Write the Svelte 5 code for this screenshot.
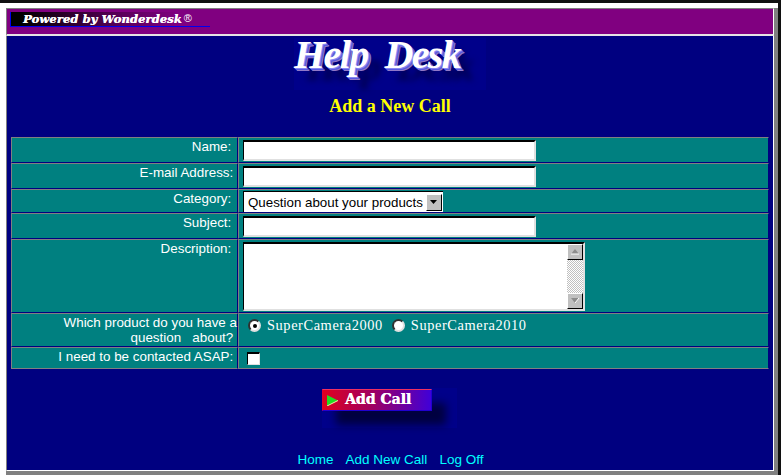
<script>
  const products = ['SuperCamera2000', 'SuperCamera2010'];
</script>

<div class="frame">
  <header class="banner">
    <div class="powered">
      <span class="powered-text">Powered by Wonderdesk</span><span class="reg">®</span>
    </div>
  </header>
  <main class="page">
    <div class="logo">Help&nbsp;&nbsp;Desk</div>
    <h1>Add a New Call</h1>
    <div class="table">
      <div class="lab pad r1">Name:&nbsp;</div>
      <div class="val r1"><span class="input"></span></div>
      <div class="lab r2">E-mail Address:&nbsp;</div>
      <div class="val r2"><span class="input"></span></div>
      <div class="lab pad r3">Category:&nbsp;</div>
      <div class="val r3">
        <span class="select">
          <span class="select-text">Question about your products</span>
          <span class="select-btn"><svg width="8" height="4" viewBox="0 0 8 4"><path d="M0 0h7L3.500 4z" fill="#000"/></svg></span>
        </span>
      </div>
      <div class="lab pad r4">Subject:&nbsp;</div>
      <div class="val r4"><span class="input"></span></div>
      <div class="lab pad r5">Description:&nbsp;</div>
      <div class="val r5">
        <span class="textarea">
          <span class="scrollbar">
            <span class="sb-btn"><svg width="10" height="6" viewBox="0 0 10 6"><path d="M5 0l4 5H1z" fill="#8c8c8c"/><path d="M1 5h8" stroke="#fff"/></svg></span>
            <span class="sb-track"></span>
            <span class="sb-btn"><svg width="10" height="6" viewBox="0 0 10 6"><path d="M1 0h8L5 5z" fill="#8c8c8c"/><path d="M9 0L5 5" stroke="#fff"/></svg></span>
          </span>
        </span>
      </div>
      <div class="lab r6 two">Which product do you have a<br />question &nbsp; about?&nbsp;</div>
      <div class="val r6 radios">
        {#each products as p, i}
          <span class="radio" class:on={i === 0}></span><span class="radio-label">{p}</span>
        {/each}
      </div>
      <div class="lab r7">I need to be contacted ASAP:&nbsp;</div>
      <div class="val r7"><span class="check"></span></div>
    </div>
    <div class="submit">
      <div class="btn">
        <svg class="play" width="11" height="11" viewBox="0 0 11 11"><path d="M0 0l11 5.500L0 11z" fill="#22dd22"/><path d="M0 11L11 5.500" stroke="#eeeeaa"/></svg>
        <span>Add Call</span>
      </div>
    </div>
    <nav class="links">
      <a href="#home">Home</a><a href="#new">Add New Call</a><a href="#off">Log Off</a>
    </nav>
  </main>
</div>

<style>
  :global(body) { margin: 0; background: #808080; }
  .frame {
    box-sizing: border-box;
    width: 781px;
    height: 475px;
    overflow: hidden;
    background: #808080;
    border-top: 3px solid #101010;
    border-right: 3px solid #101010;
    padding: 0 4px 3px 0;
    box-shadow: inset 6px 5px 0 #fff;
  }
  .banner {
    box-sizing: border-box;
    height: 28px;
    margin-top: 5px;
    margin-left: 6px;
    border-top: 1px solid #808080;
    border-left: 1px solid #808080;
    border-bottom: 2px solid #e4e4e4;
    border-right: 1px solid #fff;
    background: #800080;
    padding-top: 3px;
    padding-left: 3px;
  }
  .powered {
    box-sizing: border-box;
    width: 200px;
    height: 15px;
    background: linear-gradient(90deg, #000 0 5%, #5a005a 55%, #800080 85%);
    border-left: 1px solid #0000ee;
    border-bottom: 1px solid #0000ee;
    display: flex;
    align-items: center;
    padding-left: 12px;
    font: italic 900 11.500px/12px "DejaVu Serif", serif;
    color: #fff;
    white-space: nowrap;
    letter-spacing: 0.1px;
    text-shadow: 0.4px 0 0 #fff;
  }
  .reg { font: 11px "Liberation Sans", sans-serif; margin-left: 2px; margin-top: -3px; text-shadow: none; letter-spacing: 0; }
  .page {
    box-sizing: border-box;
    height: 435px;
    margin-left: 6px;
    border-left: 1px solid #808080;
    border-right: 1px solid #fff;
    border-bottom: 1px solid #fff;
    background: #000080;
    display: flex;
    flex-direction: column;
    align-items: center;
  }
  .logo {
    width: 192px;
    height: 52px;
    margin-top: 2px;
    margin-bottom: -2px;
    font: italic 700 40px/34px "Liberation Serif", serif;
    letter-spacing: -1.6px;
    white-space: nowrap;
    background: #00008a;
    color: #fff;
    text-shadow: 1px 1px 0 #8888f0, 2px 2px 0 #5858e0, 3px 3px 0 #9078c8, 12px 12px 6px #000050;
  }
  h1 {
    margin: 8px 0 0;
    font: 700 18px/20px "Liberation Serif", serif;
    color: #ffff00;
  }
  .table {
    box-sizing: border-box;
    width: 758px;
    margin-top: 21px;
    margin-left: 4px;
    align-self: flex-start;
    display: grid;
    grid-template-columns: 227px 1fr;
    grid-template-rows: 26px 26px 24px 26px 74px 34px 22px;
    background: #000080;
    font: 13.400px/15px "Liberation Sans", sans-serif;
    color: #fff;
  }
  .lab, .val {
    box-sizing: border-box;
    background: #008080;
    border-bottom: 1px solid #000080;
    border-top: 1px solid #808080;
    border-left: 1px solid #808080;
  }
  .lab {
    text-align: right;
    padding-top: 1px;
    border-right: 1px solid #000080;
    white-space: nowrap;
  }
  .lab.pad { padding-right: 2px; }
  .val { padding: 2px 0 0 4px; border-right: 1px solid #000080; }
  .r3.val { padding-top: 1px; }
  .r7 { border-bottom-color: #808080; }
  .input {
    display: block;
    box-sizing: border-box;
    width: 293px;
    height: 21px;
    background: #fff;
    border-top: 2px solid #000;
    border-left: 1px solid #000;
    border-right: 2px solid #e0e0e0;
    border-bottom: 2px solid #e0e0e0;
  }
  .select {
    display: flex;
    align-items: center;
    box-sizing: border-box;
    width: 200px;
    height: 21px;
    background: #fff;
    border-top: 1px solid #000;
    border-left: 1px solid #000;
    color: #000;
    font-size: 13.330px;
    justify-content: space-between;
    padding: 0 1px 0 4px;
  }
  .select-btn {
    box-sizing: border-box;
    width: 16px;
    height: 17px;
    background: #c0c0c0;
    border-top: 1px solid #fff;
    border-left: 1px solid #fff;
    border-right: 1px solid #000;
    border-bottom: 1px solid #000;
    display: flex;
    align-items: center;
    justify-content: center;
  }
  .textarea {
    display: flex;
    justify-content: flex-end;
    box-sizing: border-box;
    width: 342px;
    height: 69px;
    background: #fff;
    border-top: 2px solid #000;
    border-left: 1px solid #000;
    border-right: 2px solid #e0e0e0;
    border-bottom: 2px solid #e0e0e0;
  }
  .scrollbar {
    width: 16px;
    display: flex;
    flex-direction: column;
    background-image: conic-gradient(#c0c0c0 25%, #fff 0 50%, #c0c0c0 0 75%, #fff 0);
    background-size: 2px 2px;
  }
  .sb-btn {
    box-sizing: border-box;
    height: 16px;
    background: #c0c0c0;
    border-top: 1px solid #fff;
    border-left: 1px solid #fff;
    border-right: 1px solid #000;
    border-bottom: 1px solid #000;
    display: flex;
    align-items: center;
    justify-content: center;
  }
  .sb-track { flex: 1; }
  .radios {
    display: flex;
    align-items: flex-start;
    padding-top: 3px;
    padding-left: 9px;
    font: 14.400px/17px "Liberation Serif", serif;
  }
  .radio {
    box-sizing: border-box;
    width: 13px;
    height: 13px;
    margin-top: 2px;
    margin-right: 6px;
    border-radius: 50%;
    background: #fff;
    border: 2px solid #303030;
    border-right-color: #e0e0e0;
    border-bottom-color: #e0e0e0;
    position: relative;
  }
  .radio.on::after {
    content: '';
    position: absolute;
    left: 2.500px;
    top: 2.500px;
    width: 4px;
    height: 4px;
    border-radius: 50%;
    background: #000;
  }
  .radio-label { margin-right: 9px; letter-spacing: 0.58px; }
  .r7.val { padding-top: 4px; padding-left: 8px; }
  .check {
    display: block;
    box-sizing: border-box;
    width: 13px;
    height: 13px;
    background: #fff;
    border-top: 2px solid #000;
    border-left: 1px solid #000;
    border-right: 1px solid #e0e0e0;
    border-bottom: 1px solid #e0e0e0;
  }
  .submit {
    box-sizing: border-box;
    width: 135px;
    height: 40px;
    margin-top: 19px;
    margin-right: 1px;
    padding-top: 1px;
    background: #00008a;
  }
  .btn {
    box-sizing: border-box;
    width: 110px;
    height: 22px;
    background: linear-gradient(90deg, #e00020 0, #a00060 45%, #4000d8 100%);
    border: 1px solid #e00030;
    border-right-color: #2000d0;
    border-bottom-color: #2000d0;
    border-top-color: #f03060;
    box-shadow: 14px 14px 8px #000040;
    display: flex;
    align-items: center;
    padding-left: 4px;
    padding-bottom: 3px;
    color: #fff;
    font: 900 14px/14px "DejaVu Serif", serif;
    white-space: nowrap;
    text-shadow: 0.4px 0 0 #fff;
  }
  .play { margin-right: 7px; margin-top: 3px; }
  .links {
    display: flex;
    gap: 12px;
    margin-top: auto;
    margin-bottom: 2px;
    margin-left: 1px;
    font: 13.500px/16px "Liberation Sans", sans-serif;
  }
  .links a { color: #00ffff; text-decoration: none; }
</style>
